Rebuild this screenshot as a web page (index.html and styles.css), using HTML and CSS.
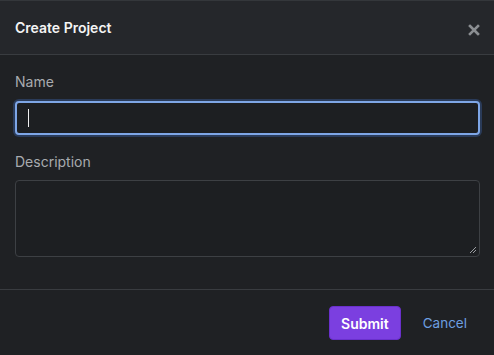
FILE: index.html
```html
<!DOCTYPE html>
<html lang="en">
<head>
  <meta charset="UTF-8">
  <title>Create Project</title>
  <link rel="stylesheet" href="styles.css">
</head>
<body>
  <div class="modal">
    <div class="modal-header">
      <h2 class="modal-title">Create Project</h2>
      <button class="close" aria-label="Close">
        <svg viewBox="0 0 12 12" width="12" height="12">
          <path d="M2 2 L10 10 M10 2 L2 10" stroke="#8b8e92" stroke-width="2.6" stroke-linecap="square"/>
        </svg>
      </button>
    </div>

    <div class="modal-body">
      <label class="field-label" for="name">Name</label>
      <div class="input focused" id="name"><span class="caret"></span></div>

      <label class="field-label second" for="description">Description</label>
      <div class="textarea" id="description">
        <svg class="grip" viewBox="0 0 8 8" width="8" height="8">
          <path d="M7 1 L1 7 M7 4 L4 7" stroke="#9a9da1" stroke-width="1"/>
        </svg>
      </div>
    </div>

    <div class="modal-footer">
      <button class="button button-primary">Submit</button>
      <button class="button button-link">Cancel</button>
    </div>
  </div>
</body>
</html>
```

FILE: styles.css
```css
body {
  margin: 0;
  background-color: #1f2124;
  font-family: Inter, "Noto Sans", sans-serif;
  color: #e8e8e8;
}
.modal {
  width: 494px;
  height: 355px;
  background-color: #1f2124;
  border-top: 1px solid #34373b;
  box-sizing: border-box;
}
.modal-header {
  display: flex;
  align-items: center;
  justify-content: space-between;
  height: 53px;
  padding: 0 14px 0 15px;
  background-color: #25272b;
  border-bottom: 1px solid #393c40;
}
.modal-title {
  margin: 0;
  font-size: 14px;
  font-weight: 600;
  color: #f4f4f4;
}
.close {
  background: none;
  border: none;
  padding: 0;
  margin-top: 4px;
  display: flex;
}
.modal-body {
  padding: 17px 14px 32px 15px;
}
.field-label {
  display: block;
  font-size: 14px;
  line-height: 20px;
  color: #a8abaf;
  margin-bottom: 9px;
}
.field-label.second {
  margin-top: 17px;
  margin-bottom: 8px;
}
.input, .textarea {
  box-sizing: border-box;
  width: 465px;
  background-color: #1d1f22;
  border: 1px solid #3d4044;
  border-radius: 4px;
  position: relative;
}
.input {
  height: 34px;
  display: flex;
  align-items: center;
  padding-left: 12px;
}
.input.focused {
  border: 2px solid #7ea6e6;
  box-shadow: 0 0 0 2px rgba(64, 110, 190, 0.35);
  padding-left: 11px;
}
.caret {
  width: 1px;
  height: 18px;
  background-color: #f0f0f0;
}
.textarea {
  height: 77px;
}
.grip {
  position: absolute;
  right: 2px;
  bottom: 2px;
}
.modal-footer {
  display: flex;
  justify-content: flex-end;
  align-items: center;
  gap: 9px;
  padding: 16px 15px 15px;
  border-top: 1px solid #393c40;
}
.button {
  font-family: Inter, "Noto Sans", sans-serif;
  font-size: 14px;
  height: 34px;
  border-radius: 4px;
  cursor: pointer;
}
.button-primary {
  padding: 0 11px;
  background-color: #7b3fe0;
  border: 1px solid #6a30cc;
  color: #ffffff;
  font-weight: 600;
}
.button-link {
  padding: 0 12px 0 13px;
  background: none;
  border: none;
  color: #6d9fe0;
  font-size: 13.5px;
}
```
